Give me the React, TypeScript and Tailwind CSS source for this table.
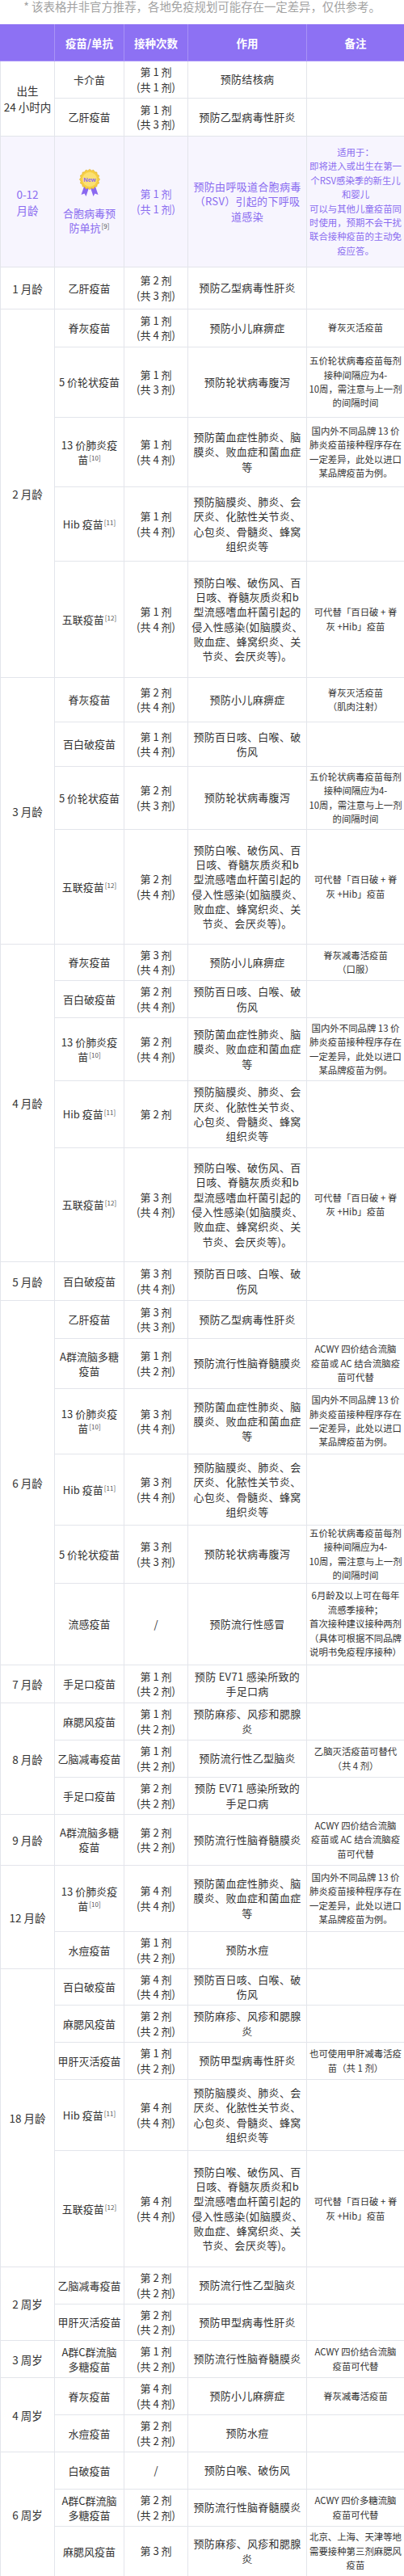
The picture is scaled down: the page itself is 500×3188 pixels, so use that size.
import React from "react";

type Row = {
  name: React.ReactNode;
  dose: string;
  effect: string;
  note?: string;
  h: number;
};

type Group = { age: string; rows: Row[]; rsv?: boolean };

const Sup = ({ n }: { n: number }) => (
  <sup className="ml-[1px] text-[8px] text-[#555]">[{n}]</sup>
);

const PCV = (
  <>
    13 价肺炎疫
    <br />苗<Sup n={10} />
  </>
);
const HIB = (
  <>
    Hib 疫苗<Sup n={11} />
  </>
);
const PENTA = (
  <>
    五联疫苗<Sup n={12} />
  </>
);

const EFF_PCV = "预防菌血症性肺炎、脑\n膜炎、败血症和菌血症\n等";
const EFF_HIB = "预防脑膜炎、肺炎、会\n厌炎、化脓性关节炎、\n心包炎、骨髓炎、蜂窝\n组织炎等";
const EFF_PENTA =
  "预防白喉、破伤风、百\n日咳、脊髓灰质炎和b\n型流感嗜血杆菌引起的\n侵入性感染(如脑膜炎、\n败血症、蜂窝织炎、关\n节炎、会厌炎等)。";
const EFF_DTP = "预防百日咳、白喉、破\n伤风";
const EFF_MMR = "预防麻疹、风疹和腮腺\n炎";
const EFF_EV71 = "预防 EV71 感染所致的\n手足口病";
const NOTE_PCV = "国内外不同品牌 13 价\n肺炎疫苗接种程序存在\n一定差异，此处以进口\n某品牌疫苗为例。";
const NOTE_ROTA = "五价轮状病毒疫苗每剂\n接种间隔应为4-\n10周，需注意与上一剂\n的间隔时间";
const NOTE_PENTA = "可代替「百日破 + 脊\n灰 +Hib」疫苗";
const NOTE_MEN = "ACWY 四价结合流脑\n疫苗或 AC 结合流脑疫\n苗可代替";

const dose = (n: number, total: number) => `第 ${n} 剂\n(共 ${total} 剂)`;

const groups: Group[] = [
  {
    age: "出生\n24 小时内",
    rows: [
      { name: "卡介苗", dose: dose(1, 1), effect: "预防结核病", h: 46 },
      { name: "乙肝疫苗", dose: dose(1, 3), effect: "预防乙型病毒性肝炎", h: 47 },
    ],
  },
  {
    age: "0-12\n月龄",
    rsv: true,
    rows: [
      {
        name: "RSV",
        dose: dose(1, 1),
        effect: "预防由呼吸道合胞病毒\n（RSV）引起的下呼吸\n道感染",
        note:
          "适用于：\n即将进入或出生在第一\n个RSV感染季的新生儿\n和婴儿\n可以与其他儿童疫苗同\n时使用，预期不会干扰\n联合接种疫苗的主动免\n疫应答。",
        h: 162,
      },
    ],
  },
  {
    age: "1 月龄",
    rows: [{ name: "乙肝疫苗", dose: dose(2, 3), effect: "预防乙型病毒性肝炎", h: 52 }],
  },
  {
    age: "2 月龄",
    rows: [
      { name: "脊灰疫苗", dose: dose(1, 4), effect: "预防小儿麻痹症", note: "脊灰灭活疫苗", h: 47 },
      { name: "5 价轮状疫苗", dose: dose(1, 3), effect: "预防轮状病毒腹泻", note: NOTE_ROTA, h: 87 },
      { name: PCV, dose: dose(1, 4), effect: EFF_PCV, note: NOTE_PCV, h: 86 },
      { name: HIB, dose: dose(1, 4), effect: EFF_HIB, h: 92 },
      { name: PENTA, dose: dose(1, 4), effect: EFF_PENTA, note: NOTE_PENTA, h: 144 },
    ],
  },
  {
    age: "3 月龄",
    rows: [
      { name: "脊灰疫苗", dose: dose(2, 4), effect: "预防小儿麻痹症", note: "脊灰灭活疫苗\n（肌肉注射）", h: 55 },
      { name: "百白破疫苗", dose: dose(1, 4), effect: EFF_DTP, h: 55 },
      { name: "5 价轮状疫苗", dose: dose(2, 3), effect: "预防轮状病毒腹泻", note: NOTE_ROTA, h: 78 },
      { name: PENTA, dose: dose(2, 4), effect: EFF_PENTA, note: NOTE_PENTA, h: 142 },
    ],
  },
  {
    age: "4 月龄",
    rows: [
      { name: "脊灰疫苗", dose: dose(3, 4), effect: "预防小儿麻痹症", note: "脊灰减毒活疫苗\n（口服）", h: 45 },
      { name: "百白破疫苗", dose: dose(2, 4), effect: EFF_DTP, h: 46 },
      { name: PCV, dose: dose(2, 4), effect: EFF_PCV, note: NOTE_PCV, h: 78 },
      { name: HIB, dose: "第 2 剂", effect: EFF_HIB, h: 83 },
      { name: PENTA, dose: dose(3, 4), effect: EFF_PENTA, note: NOTE_PENTA, h: 141 },
    ],
  },
  {
    age: "5 月龄",
    rows: [{ name: "百白破疫苗", dose: dose(3, 4), effect: EFF_DTP, h: 48 }],
  },
  {
    age: "6 月龄",
    rows: [
      { name: "乙肝疫苗", dose: dose(3, 3), effect: "预防乙型病毒性肝炎", h: 47 },
      { name: "A群流脑多糖\n疫苗", dose: dose(1, 2), effect: "预防流行性脑脊髓膜炎", note: NOTE_MEN, h: 62 },
      { name: PCV, dose: dose(3, 4), effect: EFF_PCV, note: NOTE_PCV, h: 81 },
      { name: HIB, dose: dose(3, 4), effect: EFF_HIB, h: 88 },
      { name: "5 价轮状疫苗", dose: dose(3, 3), effect: "预防轮状病毒腹泻", note: NOTE_ROTA, h: 72 },
      {
        name: "流感疫苗",
        dose: "/",
        effect: "预防流行性感冒",
        note: "6月龄及以上可在每年\n流感季接种；\n首次接种建议接种两剂\n（具体可根据不同品牌\n说明书免疫程序接种）",
        h: 101,
      },
    ],
  },
  {
    age: "7 月龄",
    rows: [{ name: "手足口疫苗", dose: dose(1, 2), effect: EFF_EV71, h: 47 }],
  },
  {
    age: "8 月龄",
    rows: [
      { name: "麻腮风疫苗", dose: dose(1, 2), effect: EFF_MMR, h: 46 },
      { name: "乙脑减毒疫苗", dose: dose(1, 2), effect: "预防流行性乙型脑炎", note: "乙脑灭活疫苗可替代\n（共 4 剂）", h: 46 },
      { name: "手足口疫苗", dose: dose(2, 2), effect: EFF_EV71, h: 46 },
    ],
  },
  {
    age: "9 月龄",
    rows: [
      { name: "A群流脑多糖\n疫苗", dose: dose(2, 2), effect: "预防流行性脑脊髓膜炎", note: NOTE_MEN, h: 63 },
    ],
  },
  {
    age: "12 月龄",
    rows: [
      { name: PCV, dose: dose(4, 4), effect: EFF_PCV, note: NOTE_PCV, h: 82 },
      { name: "水痘疫苗", dose: dose(1, 2), effect: "预防水痘", h: 46 },
    ],
  },
  {
    age: "18 月龄",
    rows: [
      { name: "百白破疫苗", dose: dose(4, 4), effect: EFF_DTP, h: 45 },
      { name: "麻腮风疫苗", dose: dose(2, 2), effect: EFF_MMR, h: 46 },
      { name: "甲肝灭活疫苗", dose: dose(1, 2), effect: "预防甲型病毒性肝炎", note: "也可使用甲肝减毒活疫\n苗（共 1 剂）", h: 46 },
      { name: HIB, dose: dose(4, 4), effect: EFF_HIB, h: 88 },
      { name: PENTA, dose: dose(4, 4), effect: EFF_PENTA, note: NOTE_PENTA, h: 144 },
    ],
  },
  {
    age: "2 周岁",
    rows: [
      { name: "乙脑减毒疫苗", dose: dose(2, 2), effect: "预防流行性乙型脑炎", h: 46 },
      { name: "甲肝灭活疫苗", dose: dose(2, 2), effect: "预防甲型病毒性肝炎", h: 45 },
    ],
  },
  {
    age: "3 周岁",
    rows: [
      { name: "A群C群流脑\n多糖疫苗", dose: dose(1, 2), effect: "预防流行性脑脊髓膜炎", note: "ACWY 四价结合流脑\n疫苗可代替", h: 46 },
    ],
  },
  {
    age: "4 周岁",
    rows: [
      { name: "脊灰疫苗", dose: dose(4, 4), effect: "预防小儿麻痹症", note: "脊灰减毒活疫苗", h: 46 },
      { name: "水痘疫苗", dose: dose(2, 2), effect: "预防水痘", h: 46 },
    ],
  },
  {
    age: "6 周岁",
    rows: [
      { name: "白破疫苗", dose: "/", effect: "预防白喉、破伤风", h: 46 },
      { name: "A群C群流脑\n多糖疫苗", dose: dose(2, 2), effect: "预防流行性脑脊髓膜炎", note: "ACWY 四价多糖流脑\n疫苗可代替", h: 46 },
      { name: "麻腮风疫苗", dose: "第 3 剂", effect: EFF_MMR, note: "北京、上海、天津等地\n需要接种第三剂麻腮风\n疫苗", h: 62 },
    ],
  },
];

function NewBadge() {
  // scalloped rosette
  const pts: string[] = [];
  for (let i = 0; i < 32; i++) {
    const a = (Math.PI * 2 * i) / 32;
    const r = i % 2 === 0 ? 12.5 : 11;
    pts.push(`${(15 + r * Math.sin(a)).toFixed(2)},${(13 - r * Math.cos(a)).toFixed(2)}`);
  }
  return (
    <svg width="30" height="35" viewBox="0 0 30 35" className="mx-auto block">
      <polygon points="9,19 14.5,22 10.5,34 8.5,30.5 4.5,32" fill="#8a68f0" />
      <polygon points="21,19 15.5,22 19.5,34 21.5,30.5 25.5,32" fill="#8a68f0" />
      <polygon points={pts.join(" ")} fill="#f6cf45" stroke="#e5b631" strokeWidth="0.8" />
      <circle cx="15" cy="13" r="9" fill="#fbe072" />
      <text
        x="15"
        y="15.6"
        textAnchor="middle"
        fontSize="7.5"
        fontWeight="700"
        fill="#8a68f0"
        fontFamily="Liberation Sans, Arial, sans-serif"
      >
        New
      </text>
    </svg>
  );
}

const cell = "border border-[#e3e5eb] text-center align-middle";

export default function App() {
  return (
    <div className="w-[500px] bg-white font-['Noto_Sans_CJK_SC','Noto_Sans',sans-serif] text-[#333]">
      <p className="pt-[1px] text-center text-[14.4px] leading-[14px] text-[#a3a3a3]">
        * 该表格并非官方推荐，各地免疫规划可能存在一定差异，仅供参考。
      </p>
      <table className="mt-[15px] w-[500px] table-fixed border-collapse">
        <colgroup>
          <col className="w-[67px]" />
          <col className="w-[86px]" />
          <col className="w-[79px]" />
          <col className="w-[147px]" />
          <col className="w-[121px]" />
        </colgroup>
        <thead>
          <tr className="h-[45px] bg-[#8d71f3] text-[13.5px] font-bold text-white">
            <th className="border border-[#a893f6] border-t-[#8d71f3] border-l-[#8d71f3]" />
            <th className="border border-[#a893f6] border-t-[#8d71f3]">疫苗/单抗</th>
            <th className="border border-[#a893f6] border-t-[#8d71f3]">接种次数</th>
            <th className="border border-[#a893f6] border-t-[#8d71f3]">作用</th>
            <th className="border border-[#a893f6] border-t-[#8d71f3] border-r-[#8d71f3]">备注</th>
          </tr>
        </thead>
        <tbody>
          {groups.map((g) =>
            g.rows.map((r, i) => (
              <tr
                key={g.age + i}
                className={g.rsv ? "bg-[#f7f5fe] text-[#8a6cf0]" : ""}
                style={{ height: r.h }}
              >
                {i === 0 && (
                  <td
                    rowSpan={g.rows.length}
                    className={`${cell} whitespace-pre-line text-[13.5px] leading-[20px]`}
                  >
                    {g.age}
                  </td>
                )}
                <td className={`${cell} whitespace-pre-line px-[2px] text-[13px] leading-[18px]`}>
                  {r.name === "RSV" ? (
                    <div>
                      <div className="mb-[11px]">
                        <NewBadge />
                      </div>
                      合胞病毒预
                      <br />
                      防单抗<Sup n={9} />
                    </div>
                  ) : (
                    r.name
                  )}
                </td>
                <td className={`${cell} whitespace-pre-line text-[13px] leading-[18.3px]`}>{r.dose}</td>
                <td
                  className={`${cell} whitespace-pre px-[2px] text-[13px] leading-[18.3px] tracking-[0.3px]`}
                >
                  {r.effect}
                </td>
                <td className={`${cell} whitespace-pre px-[1px] text-[11.4px] leading-[17.4px]`}>
                  {r.note ?? ""}
                </td>
              </tr>
            ))
          )}
        </tbody>
      </table>
    </div>
  );
}
